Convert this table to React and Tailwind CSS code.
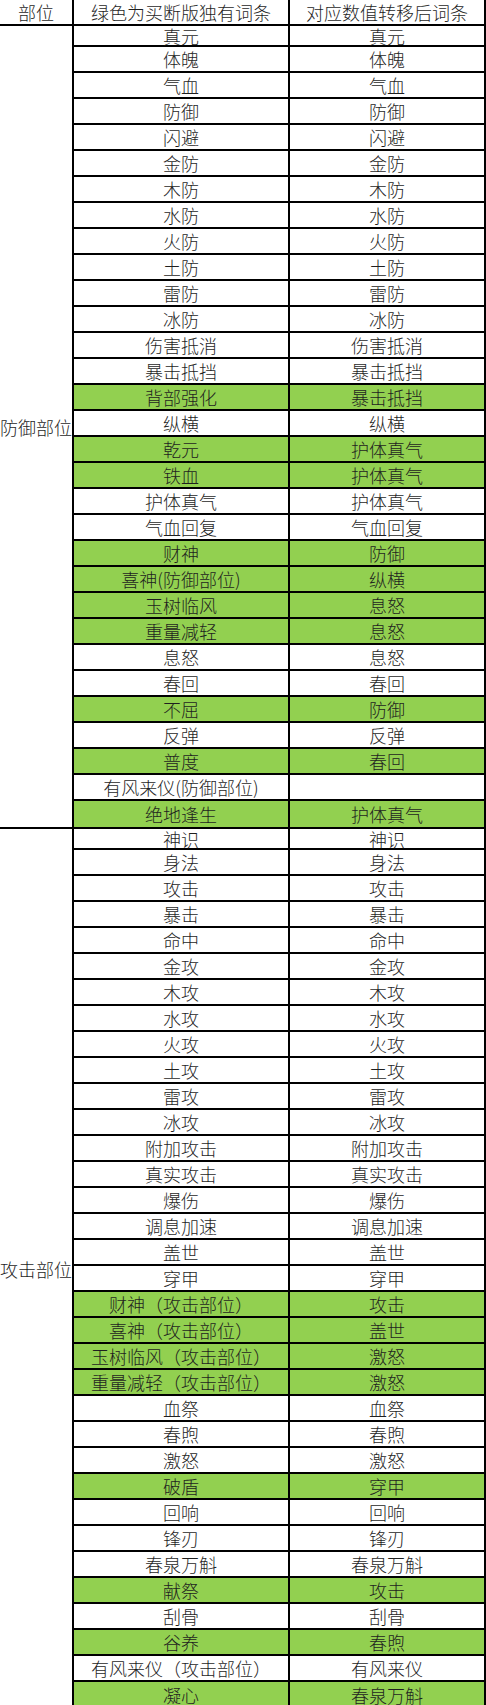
import React from 'react';

const defenseRows = [
  ['真元', '真元'],
  ['体魄', '体魄'],
  ['气血', '气血'],
  ['防御', '防御'],
  ['闪避', '闪避'],
  ['金防', '金防'],
  ['木防', '木防'],
  ['水防', '水防'],
  ['火防', '火防'],
  ['土防', '土防'],
  ['雷防', '雷防'],
  ['冰防', '冰防'],
  ['伤害抵消', '伤害抵消'],
  ['暴击抵挡', '暴击抵挡'],
  ['背部强化', '暴击抵挡', true],
  ['纵横', '纵横'],
  ['乾元', '护体真气', true],
  ['铁血', '护体真气', true],
  ['护体真气', '护体真气'],
  ['气血回复', '气血回复'],
  ['财神', '防御', true],
  ['喜神(防御部位)', '纵横', true],
  ['玉树临风', '息怒', true],
  ['重量减轻', '息怒', true],
  ['息怒', '息怒'],
  ['春回', '春回'],
  ['不屈', '防御', true],
  ['反弹', '反弹'],
  ['普度', '春回', true],
  ['有风来仪(防御部位)', ''],
  ['绝地逢生', '护体真气', true],
];

const attackRows = [
  ['神识', '神识'],
  ['身法', '身法'],
  ['攻击', '攻击'],
  ['暴击', '暴击'],
  ['命中', '命中'],
  ['金攻', '金攻'],
  ['木攻', '木攻'],
  ['水攻', '水攻'],
  ['火攻', '火攻'],
  ['土攻', '土攻'],
  ['雷攻', '雷攻'],
  ['冰攻', '冰攻'],
  ['附加攻击', '附加攻击'],
  ['真实攻击', '真实攻击'],
  ['爆伤', '爆伤'],
  ['调息加速', '调息加速'],
  ['盖世', '盖世'],
  ['穿甲', '穿甲'],
  ['财神（攻击部位）', '攻击', true],
  ['喜神（攻击部位）', '盖世', true],
  ['玉树临风（攻击部位）', '激怒', true],
  ['重量减轻（攻击部位）', '激怒', true],
  ['血祭', '血祭'],
  ['春煦', '春煦'],
  ['激怒', '激怒'],
  ['破盾', '穿甲', true],
  ['回响', '回响'],
  ['锋刃', '锋刃'],
  ['春泉万斛', '春泉万斛'],
  ['献祭', '攻击', true],
  ['刮骨', '刮骨'],
  ['谷养', '春煦', true],
  ['有风来仪（攻击部位）', '有风来仪'],
  ['凝心', '春泉万斛', true],
];

const Section = ({ title, rows }) => (
  <div className="flex border-b-2 border-black">
    <div className="w-[74px] shrink-0 border-r-2 border-black flex items-center justify-center whitespace-nowrap">
      {title}
    </div>
    <div className="flex-1 flex flex-col">
      {rows.map(([a, b, green], i) => (
        <div
          key={i}
          className={`flex ${i === 0 ? 'h-[21px]' : 'h-[26px]'} ${i < rows.length - 1 ? 'border-b-2 border-black' : ''} ${green ? 'bg-[#92d050]' : ''}`}
        >
          <div className="w-[216px] shrink-0 border-r-2 border-black flex items-center justify-center whitespace-nowrap">
            {a}
          </div>
          <div className="flex-1 flex items-center justify-center whitespace-nowrap">{b}</div>
        </div>
      ))}
    </div>
  </div>
);

const App = () => {
  return (
    <div
      className="w-[486px] bg-white text-[#1f1f1f] text-[18px] leading-none font-light border-r-2 border-black"
      style={{ fontFamily: '"Noto Sans CJK SC", "Noto Sans", sans-serif' }}
    >
      <div className="flex h-[26px] border-b-2 border-black">
        <div className="w-[74px] shrink-0 border-r-2 border-black flex items-center justify-center">部位</div>
        <div className="w-[216px] shrink-0 border-r-2 border-black flex items-center justify-center whitespace-nowrap">
          绿色为买断版独有词条
        </div>
        <div className="flex-1 flex items-center justify-center whitespace-nowrap">对应数值转移后词条</div>
      </div>
      <Section title="防御部位" rows={defenseRows} />
      <Section title="攻击部位" rows={attackRows} />
    </div>
  );
};

export default App;
